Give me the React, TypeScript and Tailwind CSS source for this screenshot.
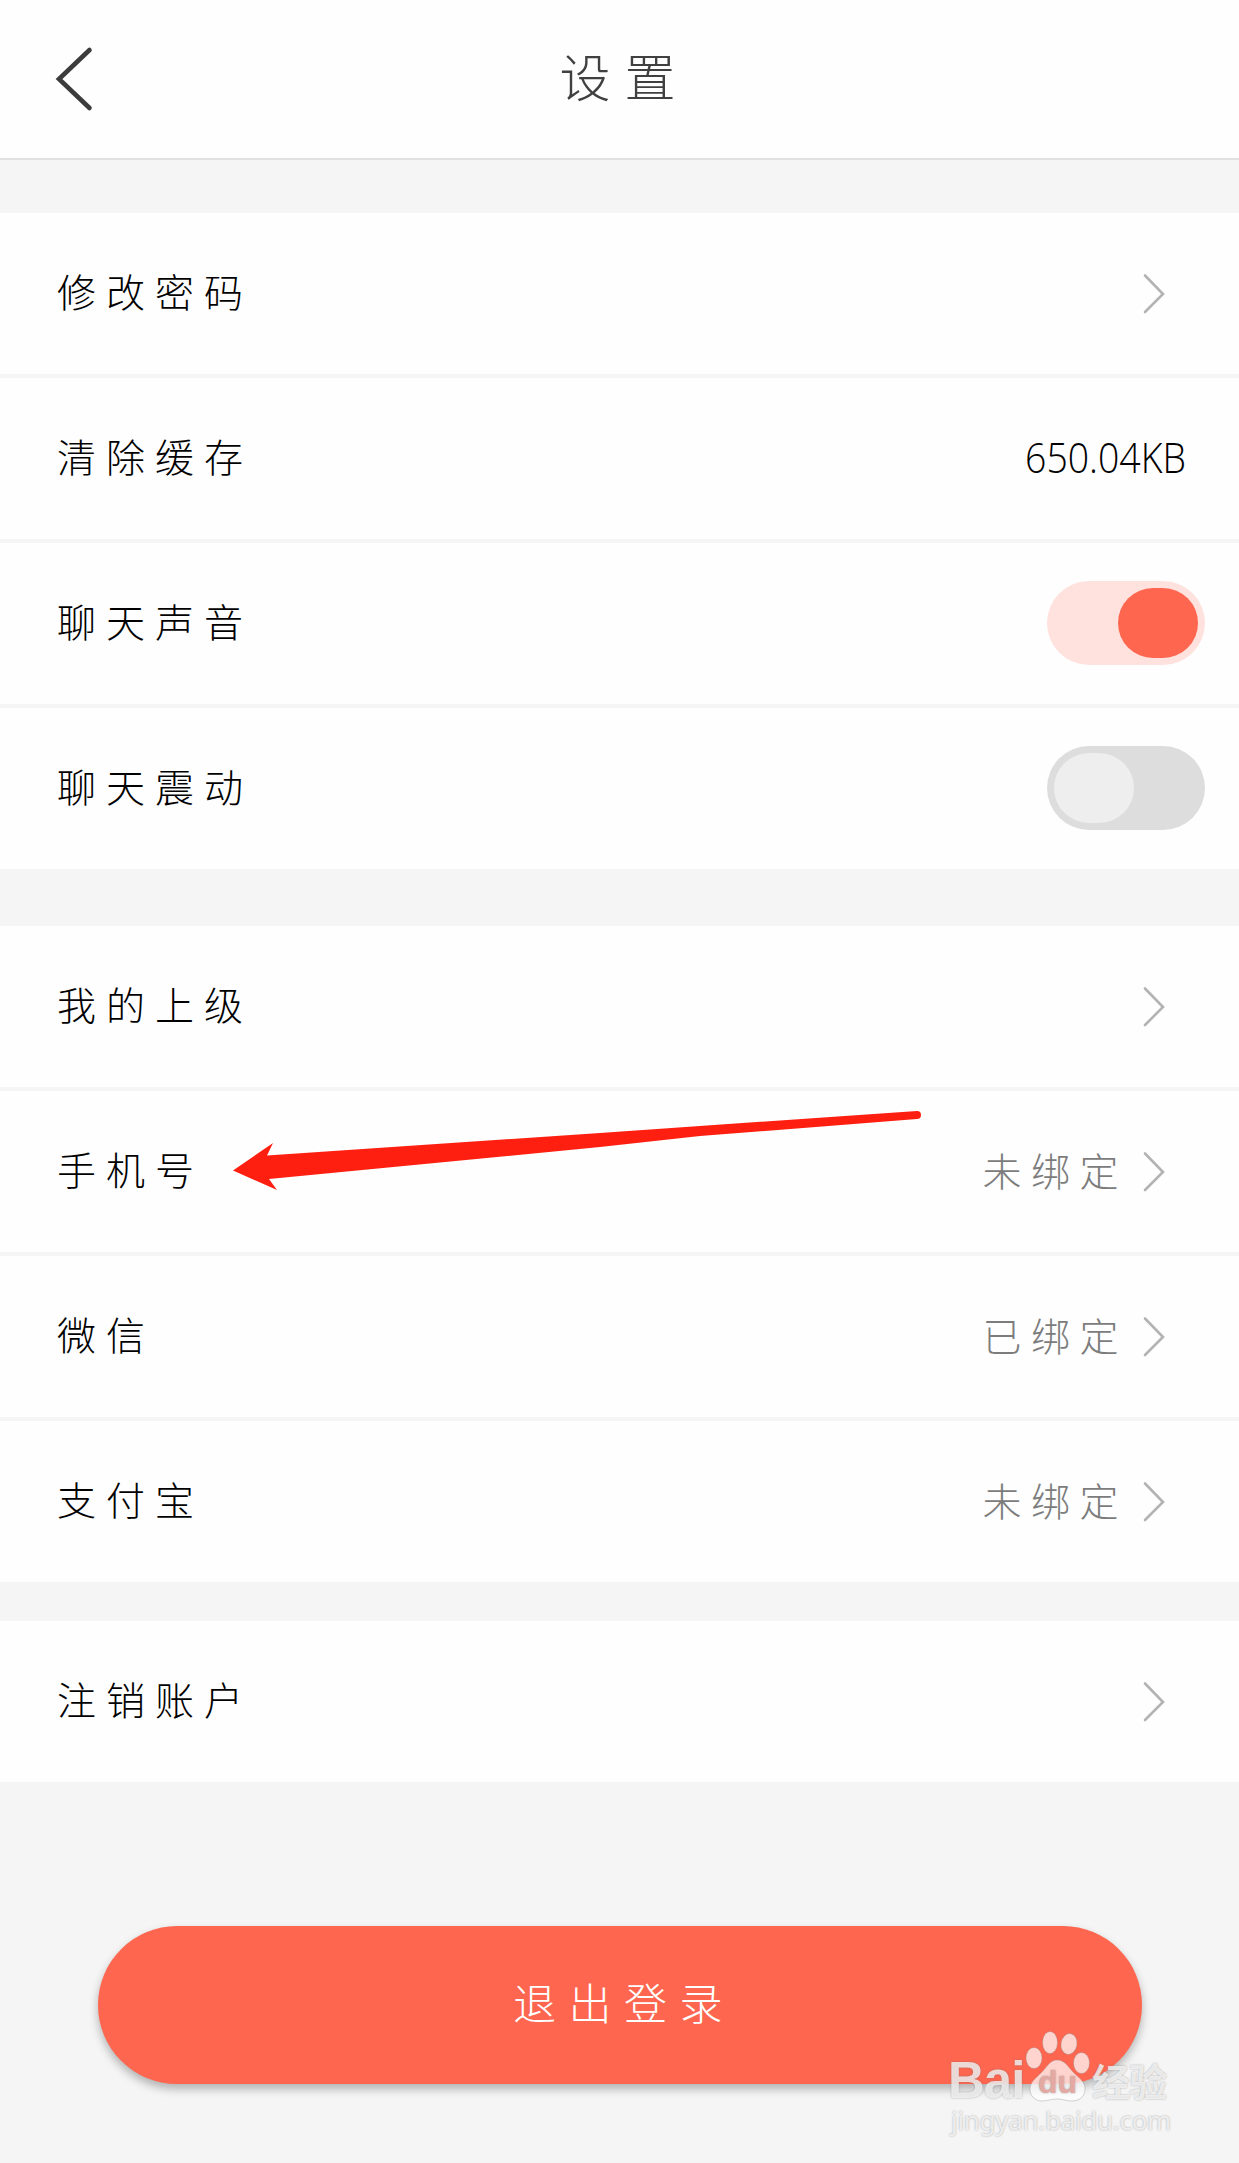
import type { ReactNode } from "react";

function Chevron() {
  return (
    <svg className="h-[42px] w-6 shrink-0" viewBox="0 0 24 42" fill="none">
      <path d="M2 2.5 L20 21 L2 39" stroke="#b3b3b3" strokeWidth="2.6" strokeLinecap="round" strokeLinejoin="miter" />
    </svg>
  );
}

function Row({ label, children }: { label: string; children?: ReactNode }) {
  return (
    <div className="relative flex h-[161px] items-center justify-between bg-[#fefefe] pl-[57px]">
      <span className="-mt-[7px] text-[39px] leading-none font-light tracking-[10px] text-black">{label}</span>
      {children}
    </div>
  );
}

function LinkRow({ label, status, children }: { label: string; status?: string; children?: ReactNode }) {
  return (
    <Row label={label}>
      <div className="flex items-center gap-[15px] pr-[72px]">
        {status && <span className="-mt-[5px] text-[39px] leading-none font-light tracking-[9.5px] text-[#7c7c7c]">{status}</span>}
        <Chevron />
      </div>
      {children}
    </Row>
  );
}

function Toggle({ on }: { on: boolean }) {
  return (
    <div
      className={
        on
          ? "mr-[34px] -mt-px flex h-[84px] w-[158px] items-center justify-end rounded-full bg-[#ffe2de] px-[7px]"
          : "mr-[34px] -mt-px flex h-[84px] w-[158px] items-center justify-start rounded-full bg-[#dddddd] px-[7px]"
      }
    >
      <div className={on ? "h-[70px] w-20 rounded-full bg-[#fe664f]" : "h-[70px] w-20 rounded-full bg-[#eeeeee]"} />
    </div>
  );
}

function PointerArrow() {
  return (
    <svg className="absolute top-[19px] left-[232px] h-[82px] w-[692px]" viewBox="232 1110 692 82">
      <path
        d="M233 1170.5 L273 1143 L267 1155.5 L600 1133 L917 1111 Q921 1111 921 1115 Q921 1119 917 1119 L700 1136 L600 1147 L269 1179 L277 1190 Z"
        fill="#ff1f11"
      />
    </svg>
  );
}

function Watermark() {
  return (
    <div className="absolute top-[2026px] left-[948px] h-[114px] w-[230px] text-white/75 [text-shadow:0_0_2px_rgba(110,110,110,0.6)]">
      <span className="absolute top-[29px] left-0 font-['Liberation_Sans'] text-[51px] leading-[52px] font-bold tracking-[-1px]">Bai</span>
      <svg className="absolute top-[4px] left-[76px] h-[74px] w-[68px]" viewBox="0 0 68 74" fill="#fff" fillOpacity="0.72" stroke="#888" strokeOpacity="0.35">
        <ellipse cx="10" cy="28" rx="8" ry="10.5" />
        <ellipse cx="26" cy="12.500" rx="7.500" ry="11" />
        <ellipse cx="45" cy="14" rx="8" ry="10.5" transform="rotate(10 45 14)" />
        <ellipse cx="57.500" cy="33" rx="8" ry="10.500" />
        <path d="M33 30 C41 30 44 37 50 43 C57 49 61 53 61 59 C61 66 56 71 48 71 C42 71 39 69 33 69 C27 69 24 71 18 71 C11 71 6 66 6 59 C6 52 12 48 17 43 C23 37 26 30 33 30 Z" />
      </svg>
      <span className="absolute top-[38px] left-[90px] font-['Liberation_Sans'] text-[32px] leading-9 font-bold text-[#e3a9a2]">du</span>
      <span className="absolute top-[35px] left-[144px] text-[38px] leading-[38px] font-bold tracking-[-1px]">经验</span>
      <span className="absolute top-[78px] left-[3px] font-['Noto_Sans'] text-[26px] leading-8 tracking-[-0.3px]">jingyan.baidu.com</span>
    </div>
  );
}

export default function App() {
  return (
    <div className="relative h-[2163px] w-[1239px] overflow-hidden bg-[#f5f5f5] font-['Noto_Sans_CJK_SC',sans-serif]">
      <header className="grid h-40 grid-cols-[1fr_auto_1fr] items-center border-b-2 border-[#e0e0e0] bg-[#fefefe]">
        <svg className="ml-[54px] h-[66px] w-10" viewBox="0 0 40 66" fill="none">
          <path d="M35.500 4 L5 33 L35.500 62" stroke="#3c3c3c" strokeWidth="4.6" strokeLinecap="round" />
        </svg>
        <h1 className="-mt-2 pl-[10px] text-[51px] leading-none font-light tracking-[14px] text-[#404040]">设置</h1>
      </header>

      <main>
        <section className="mt-[53px] flex flex-col gap-1">
          <LinkRow label="修改密码" />
          <Row label="清除缓存">
            <span className="-mt-1 mr-[53px] origin-right scale-x-[0.87] font-['Open_Sans'] text-[43px] leading-none font-light text-black">650.04KB</span>
          </Row>
          <Row label="聊天声音">
            <Toggle on />
          </Row>
          <Row label="聊天震动">
            <Toggle on={false} />
          </Row>
        </section>

        <section className="mt-[57px] flex flex-col gap-1">
          <LinkRow label="我的上级" />
          <LinkRow label="手机号" status="未绑定">
            <PointerArrow />
          </LinkRow>
          <LinkRow label="微信" status="已绑定" />
          <LinkRow label="支付宝" status="未绑定" />
        </section>

        <section className="mt-[39px]">
          <LinkRow label="注销账户" />
        </section>

        <button className="mt-36 ml-[98px] flex h-[158px] w-[1044px] items-center justify-center rounded-full bg-[#fe664f] pb-[7px] pl-2 text-[43px] leading-none font-light tracking-[12.500px] text-white shadow-[0_5px_10px_rgba(0,0,0,0.28)]">
          退出登录
        </button>
      </main>

      <Watermark />
    </div>
  );
}
